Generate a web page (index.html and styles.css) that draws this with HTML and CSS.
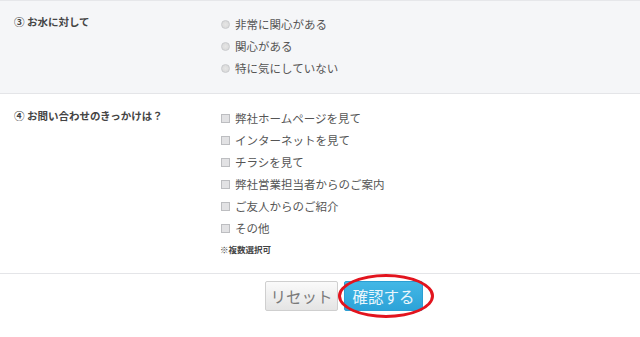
FILE: index.html
```html
<!DOCTYPE html>
<html lang="ja">
<head>
<meta charset="utf-8">
<link rel="stylesheet" href="styles.css">
</head>
<body>
<div class="form">
  <div class="row row-shaded">
    <div class="label">③ お水に対して</div>
    <div class="options">
      <div class="opt"><span class="radio"></span>非常に関心がある</div>
      <div class="opt"><span class="radio"></span>関心がある</div>
      <div class="opt"><span class="radio"></span>特に気にしていない</div>
    </div>
  </div>
  <div class="row row-plain">
    <div class="label">④ お問い合わせのきっかけは？</div>
    <div class="options">
      <div class="opt"><span class="check"></span>弊社ホームページを見て</div>
      <div class="opt"><span class="check"></span>インターネットを見て</div>
      <div class="opt"><span class="check"></span>チラシを見て</div>
      <div class="opt"><span class="check"></span>弊社営業担当者からのご案内</div>
      <div class="opt"><span class="check"></span>ご友人からのご紹介</div>
      <div class="opt"><span class="check"></span>その他</div>
      <div class="note">※複数選択可</div>
    </div>
  </div>
  <div class="actions">
    <button class="btn btn-reset">リセット</button>
    <span class="confirm-wrap">
      <button class="btn btn-confirm">確認する</button>
      <span class="ring"></span>
    </span>
  </div>
</div>
</body>
</html>
```
FILE: styles.css
```css
html, body {
  margin: 0;
  padding: 0;
  background: #fff;
}
body {
  font-family: "Noto Sans CJK JP", "Liberation Sans", sans-serif;
  color: #444;
  width: 640px;
  height: 337px;
  overflow: hidden;
}
.form {
  border-top: 1px solid #e6e7ea;
}
.row {
  display: grid;
  grid-template-columns: 220px 1fr;
  border-bottom: 1px solid #e4e5e8;
  padding-left: 14px;
}
.row-shaded {
  background: #f5f6f8;
  padding-top: 12px;
  padding-bottom: 14px;
}
.row-plain {
  padding-top: 13px;
  padding-bottom: 17px;
}
.label {
  font-size: 10.5px;
  font-weight: bold;
  color: #444;
  line-height: 18px;
}
.options {
  display: flex;
  flex-direction: column;
  margin-left: -13px;
}
.opt {
  display: flex;
  align-items: center;
  font-size: 11.5px;
  line-height: 22px;
  height: 22px;
  color: #555;
}
.radio {
  width: 7px;
  height: 7px;
  border-radius: 50%;
  border: 1px solid #c9cacd;
  background: radial-gradient(circle, #e6e6e6 0, #d6d6d6 100%);
  margin-right: 5px;
  flex: none;
}
.check {
  width: 7px;
  height: 7px;
  border: 1px solid #bdbec1;
  background: #e2e2e4;
  margin-right: 5px;
  flex: none;
}
.note {
  font-size: 8.5px;
  font-weight: bold;
  color: #444;
  line-height: 14px;
  margin-top: 3px;
  margin-left: -1px;
}
.actions {
  display: flex;
  justify-content: center;
  align-items: center;
  gap: 6px;
  padding-top: 7px;
  padding-left: 48px;
}
.btn {
  font-family: "Noto Sans CJK JP", "Liberation Sans", sans-serif;
  font-size: 15.5px;
  height: 30px;
  padding: 0;
  border-radius: 2px;
  line-height: 28px;
  white-space: nowrap;
  cursor: pointer;
}
.btn-reset {
  color: #7a7a7a;
  background: linear-gradient(#fafafa, #e4e4e4);
  border: 1px solid #cfcfcf;
  width: 73px;
}
.btn-confirm {
  color: #eaf6fc;
  background: linear-gradient(#43b7e6, #2da3d8);
  border: 1px solid #2c9fd3;
  width: 79px;
}
.confirm-wrap {
  position: relative;
  display: inline-block;
  height: 30px;
}
.ring {
  position: absolute;
  left: -6px;
  top: -7px;
  width: 90px;
  height: 38px;
  border: 3px solid #e2141e;
  border-radius: 50%;
  pointer-events: none;
}
```
